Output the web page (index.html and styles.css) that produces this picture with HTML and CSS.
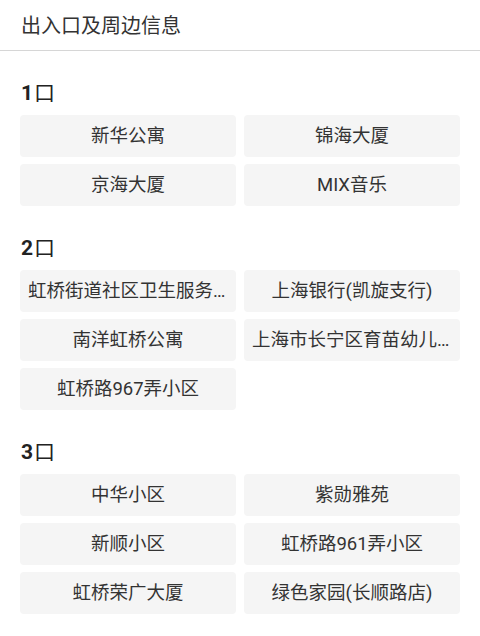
FILE: index.html
```html
<!DOCTYPE html>
<html lang="zh-CN">
<head>
  <meta charset="UTF-8" />
  <meta name="viewport" content="width=device-width, initial-scale=1.0"/>
  <title>出入口及周边信息</title>
  <link rel="stylesheet" href="styles.css">
</head>
<body>

<div class="top-bar">出入口及周边信息</div>

<div class="gate">
  <h3 class="gate-title">1<span class="gate-mark">口</span></h3>
  <div class="poi-list">
    <div class="poi">新华公寓</div>
    <div class="poi">锦海大厦</div>
    <div class="poi">京海大厦</div>
    <div class="poi">MIX音乐</div>
  </div>
</div>

<div class="gate">
  <h3 class="gate-title">2<span class="gate-mark">口</span></h3>
  <div class="poi-list">
    <div class="poi">虹桥街道社区卫生服务中心</div>
    <div class="poi">上海银行(凯旋支行)</div>
    <div class="poi">南洋虹桥公寓</div>
    <div class="poi">上海市长宁区育苗幼儿园</div>
    <div class="poi">虹桥路967弄小区</div>
  </div>
</div>

<div class="gate">
  <h3 class="gate-title">3<span class="gate-mark">口</span></h3>
  <div class="poi-list">
    <div class="poi">中华小区</div>
    <div class="poi">紫勋雅苑</div>
    <div class="poi">新顺小区</div>
    <div class="poi">虹桥路961弄小区</div>
    <div class="poi">虹桥荣广大厦</div>
    <div class="poi">绿色家园(长顺路店)</div>
  </div>
</div>

</body>
</html>
```

FILE: styles.css
```css
body {
  margin: 0;
  font-family: Roboto, "Noto Sans CJK SC", sans-serif;
  background: #fff;
  color: #333;
}
.top-bar {
  height: 50px;
  line-height: 50px;
  padding-left: 21px;
  font-size: 20px;
  font-family: "Noto Sans CJK SC", sans-serif;
  color: #333;
  border-bottom: 1px solid #d6d6d6;
}
.gate {
  padding: 30px 20px 0;
}
.gate-title {
  margin: 0 0 10px;
  padding-left: 1px;
  height: 24px;
  line-height: 24px;
  font-size: 21px;
  font-weight: bold;
  color: #222;
}
.gate-mark {
  font-weight: normal;
  margin-left: 1px;
}
.poi-list {
  display: grid;
  grid-template-columns: 1fr 1fr;
  column-gap: 8px;
  row-gap: 7px;
}
.poi {
  height: 42px;
  line-height: 42px;
  padding: 0 8px;
  background: #f5f5f5;
  border-radius: 4px;
  font-size: 18.5px;
  text-align: center;
  white-space: nowrap;
  overflow: hidden;
  text-overflow: ellipsis;
  color: #333;
}
```
